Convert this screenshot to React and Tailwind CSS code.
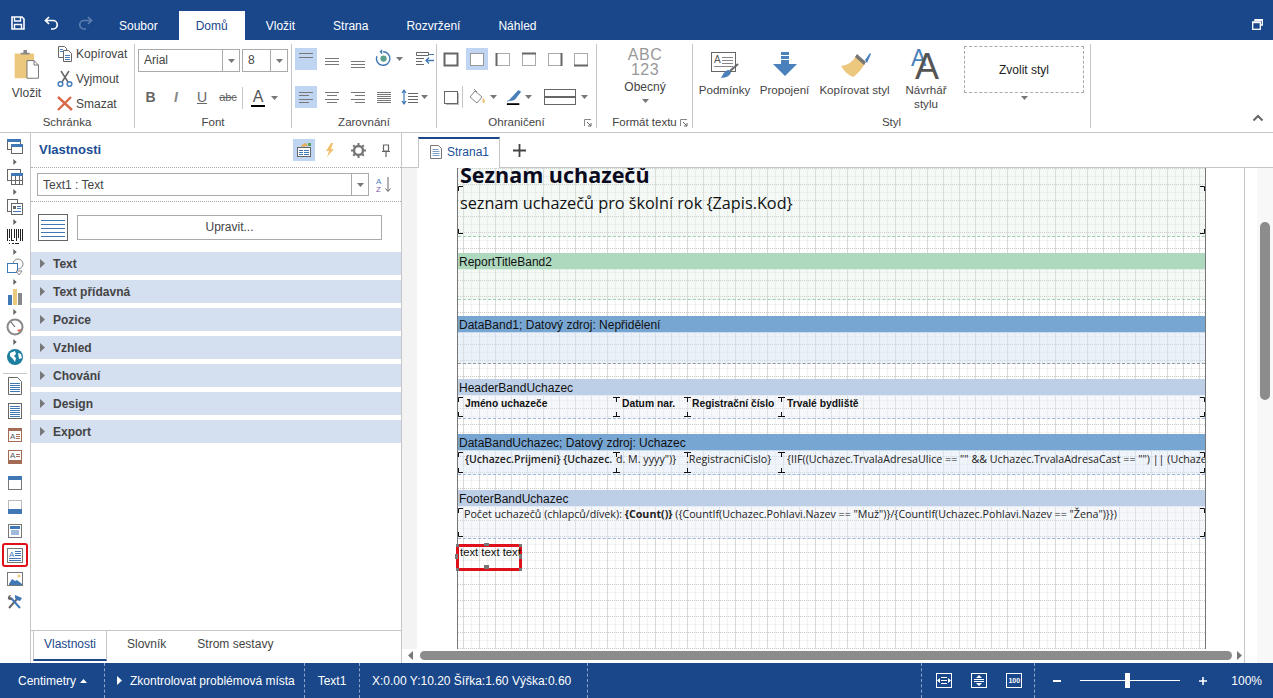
import React from "react";

const Caret = ({ c = "#777", className = "" }) => (
  <svg width="7" height="4" viewBox="0 0 9 5" className={className}><path d="M0 0h9L4.5 5z" fill={c} /></svg>
);
const RightTri = ({ c = "#777", w = 5, h = 9, className = "" }) => (
  <svg width={w} height={h} viewBox="0 0 5 9" className={className}><path d="M0 0l5 4.5L0 9z" fill={c} /></svg>
);

const Lines = ({ y, x1 = 4, x2 = 18, c = "#777" }) => (
  <g stroke={c} strokeWidth="1">{y.map((v, i) => <line key={i} x1={Array.isArray(x1) ? x1[i] : x1} x2={Array.isArray(x2) ? x2[i] : x2} y1={v + 0.5} y2={v + 0.5} />)}</g>
);
const Ic = ({ s = 22, children, active, vb }) => (
  <div className={`flex items-center justify-center shrink-0 ${active ? "bg-[#c0d5f2]" : ""}`} style={{ width: s, height: s }}>
    <svg width={s} height={s} viewBox={vb || `0 0 ${s} ${s}`}>{children}</svg>
  </div>
);

const BoxBorder = ({ sides = "", all }) => (
  <Ic>
    <rect x="4.5" y="5.5" width="13" height="12" fill="none" stroke={all ? "#666" : "#aaa"} strokeWidth={all ? 2 : 1} />
    {sides === "l" && <line x1="4.5" x2="4.5" y1="5" y2="18" stroke="#666" strokeWidth="2" />}
    {sides === "t" && <line x1="4" x2="18" y1="5.5" y2="5.5" stroke="#666" strokeWidth="2" />}
    {sides === "r" && <line x1="17.5" x2="17.5" y1="5" y2="18" stroke="#666" strokeWidth="2" />}
    {sides === "b" && <line x1="4" x2="18" y1="17.5" y2="17.5" stroke="#666" strokeWidth="2" />}
  </Ic>
);

const GroupLabel = ({ children, launcher }) => (
  <div className="relative h-[11px] text-center text-[11.5px] leading-[11px] text-[#444] mt-auto shrink-0">
    {children}
    {launcher && (
      <svg width="8" height="8" viewBox="0 0 8 8" className="absolute right-[4px] top-[2px]">
        <path d="M0.5 7V0.5H7" fill="none" stroke="#888" /><path d="M3 3l4 4M7 4v3H4" fill="none" stroke="#666" />
      </svg>
    )}
  </div>
);

const Group = ({ w, label, launcher, children }) => (
  <div className="flex flex-col h-[84px] border-r border-[#c6c6c6] shrink-0 mt-[4px]" style={{ width: w }}>
    <div className="flex-1 min-h-0">{children}</div>
    <GroupLabel launcher={launcher}>{label}</GroupLabel>
  </div>
);

function TopBar() {
  const tabs = ["Soubor", "Domů", "Vložit", "Strana", "Rozvržení", "Náhled"];
  return (
    <div className="h-[40px] bg-[#19478a] flex items-end shrink-0 text-white">
      <div className="flex items-center gap-[19px] pl-[11px] w-[100px] h-[29px] pb-[5px]">
        <svg width="14" height="14" viewBox="0 0 14 14"><path d="M1 1h10l2 2v10H1z" fill="none" stroke="#fff" strokeWidth="1.6" /><path d="M3.5 1v4h6V1M3.5 13V8.5h7V13" fill="none" stroke="#fff" strokeWidth="1.4" /></svg>
        <svg width="15" height="14" viewBox="0 0 15 14"><path d="M5 1L1.5 4.5 5 8M2 4.5h7a4 4 0 0 1 0 8.5H7" fill="none" stroke="#fff" strokeWidth="1.7" /></svg>
        <svg width="15" height="14" viewBox="0 0 15 14"><path d="M10 1l3.5 3.5L10 8M13 4.5H6a4 4 0 0 0 0 8.5h2" fill="none" stroke="#5d7fb0" strokeWidth="1.7" /></svg>
      </div>
      {tabs.map((t) => t === "Domů" ? (
        <div key={t} className="h-[29px] px-[17px] mx-[2px] bg-white text-[#19478a] text-[12px] leading-[30px]">{t}</div>
      ) : (
        <div key={t} className="h-[29px] px-[19px] text-[12px] leading-[30px] text-white">{t}</div>
      ))}
      <div className="ml-auto mr-[10px] mb-[10px]">
        <svg width="11" height="11" viewBox="0 0 11 11"><path d="M3 2V.7h7.3V6H8.5" fill="none" stroke="#fff" strokeWidth="1.3" /><rect x=".7" y="3" width="7.6" height="7.3" fill="none" stroke="#fff" strokeWidth="1.3" /><rect x="3" y=".3" width="8" height="1.6" fill="#fff" /><rect x=".3" y="2.6" width="8" height="1.6" fill="#fff" /></svg>
      </div>
    </div>
  );
}

function Ribbon() {
  return (
    <div className="h-[93px] border-b border-[#c6c6c6] flex shrink-0 relative bg-white">
      <Group w={135} label="Schránka">
        <div className="flex">
          <div className="w-[52px] flex flex-col items-center pt-[6px] pl-[2px]">
            <svg width="28" height="30" viewBox="0 0 30 34">
              <path d="M1 4h22v28H1z" fill="#ecc87f" />
              <path d="M8 5V3h3V0h4v3h3v2z" fill="#888" />
              <path d="M15 12h8l5 5v15H15z" fill="#fff" stroke="#666" />
              <path d="M23 12v5h5" fill="none" stroke="#666" />
            </svg>
            <div className="text-[12px] text-[#444] mt-[4px]">Vložit</div>
          </div>
          <div className="flex flex-col text-[12px] text-[#444] -mt-[3px]">
            {[
              ["Kopírovat", <svg key="a" width="16" height="17" viewBox="0 0 16 17"><path d="M1.5 1.5h6l2 2v9h-8z" fill="#fff" stroke="#666" /><path d="M6.5 5.5h5l3 3v8h-8z" fill="#fff" stroke="#666" /><path d="M3 4.5h3M3 6.5h3M8 10.5h5M8 12.5h5M8 14.5h5" stroke="#4a7fba" /></svg>],
              ["Vyjmout", <svg key="b" width="16" height="17" viewBox="0 0 16 17"><path d="M4 1l7 11M12 1L5 12" stroke="#666" strokeWidth="1.5" /><circle cx="3.5" cy="14" r="2.3" fill="none" stroke="#4a7fba" strokeWidth="1.6" /><circle cx="12.5" cy="14" r="2.3" fill="none" stroke="#4a7fba" strokeWidth="1.6" /></svg>],
              ["Smazat", <svg key="c" width="16" height="17" viewBox="0 0 16 17"><path d="M1 2l14 13M14 2L1 15" stroke="#d9694a" strokeWidth="2.4" /></svg>],
            ].map(([t, i]) => (
              <div key={t} className="flex items-center h-[25px] w-[77px] ml-[6px]"><div className="w-[19px]">{i}</div>{t}</div>
            ))}
          </div>
        </div>
      </Group>
      <Group w={157} label="Font">
        <div className="pl-[3px]">
          <div className="flex gap-[2px] pt-[5px]">
            <div className="w-[102px] h-[23px] border border-[#aaa] flex text-[12px] text-[#444] leading-[21px]">
              <div className="flex-1 pl-[5px]">Arial</div>
              <div className="w-[17px] border-l border-[#aaa] flex items-center justify-center"><Caret /></div>
            </div>
            <div className="w-[46px] h-[23px] border border-[#aaa] flex text-[12px] text-[#444] leading-[21px]">
              <div className="flex-1 pl-[5px]">8</div>
              <div className="w-[17px] border-l border-[#aaa] flex items-center justify-center"><Caret /></div>
            </div>
          </div>
          <div className="flex items-center pt-[14px] h-[37px] text-[#666] ml-[-3px] pl-[3px]">
            <div className="w-[25px] text-center font-bold text-[14px]">B</div>
            <div className="w-[26px] text-center italic font-bold text-[14px] text-[#888]">I</div>
            <div className="w-[26px] text-center text-[14px] underline">U</div>
            <div className="w-[26px] text-center text-[11px] line-through">abc</div>
            <div className="w-px h-[22px] bg-[#c6c6c6] mx-[1px]" />
            <div className="flex flex-col items-center w-[22px] ml-[3px] mt-[-1px]">
              <div className="text-[16px] leading-[17px] text-[#555]">A</div>
              <div className="w-[14px] h-[2px] bg-black" />
            </div>
            <Caret className="ml-[2px]" />
          </div>
        </div>
      </Group>
      <Group w={145} label="Zarovnání">
        <div className="pl-[3px] pt-[4px]">
          <div className="flex gap-[4px] items-center">
            <Ic active><Lines y={[5, 9]} /></Ic>
            <Ic><Lines y={[10, 13, 16]} /></Ic>
            <Ic><Lines y={[13, 16, 19]} /></Ic>
            <div className="flex items-center w-[30px] gap-[3px] pl-[2px]">
              <svg width="18" height="20" viewBox="0 0 20 20"><path d="M9 2a7.5 7.5 0 1 1-7 5" fill="none" stroke="#3f78b5" strokeWidth="1.6" /><path d="M8 -1v6l-3-3z" fill="#3f78b5" /><circle cx="9.5" cy="9.5" r="3.5" fill="#5ba08c" /></svg>
              <Caret />
            </div>
            <svg width="20" height="20" viewBox="0 0 20 20" className="ml-[8px]"><path d="M1.5 3.5h12v3h-12zM1 9.5h8M1 12.5h6M1 15.5h8" fill="none" stroke="#666" /><path d="M19 11.5h-7M14 8.5l-3 3 3 3" fill="none" stroke="#3f78b5" strokeWidth="1.3" /><path d="M14 5.5h5" stroke="#3f78b5" /></svg>
          </div>
          <div className="flex gap-[4px] items-center mt-[16px]">
            <Ic active><Lines y={[6, 9, 13, 16]} x2={[18, 14, 18, 14]} /></Ic>
            <Ic><Lines y={[6, 9, 13, 16]} x1={[4, 6, 4, 6]} x2={[18, 16, 18, 16]} /></Ic>
            <Ic><Lines y={[6, 9, 13, 16]} x1={[4, 8, 4, 8]} /></Ic>
            <Ic><Lines y={[6, 8, 10, 12, 14, 16]} /></Ic>
            <div className="flex items-center gap-[2px] ml-[2px]">
              <svg width="18" height="18" viewBox="0 0 18 18"><path d="M3 3v12M1 5l2-3 2 3M1 13l2 3 2-3" fill="none" stroke="#3f78b5" strokeWidth="1.2" /><path d="M7 5.5h10M7 8.5h10M7 11.5h10M7 14.5h10" stroke="#666" /></svg>
              <Caret />
            </div>
          </div>
        </div>
      </Group>
      <Group w={160} label="Ohraničení" launcher>
        <div className="pl-[3px] pt-[4px]">
          <div className="flex gap-[4px] items-center">
            <BoxBorder all />
            <Ic active><rect x="4.5" y="5.5" width="13" height="12" fill="#fff" stroke="#999" /></Ic>
            <BoxBorder sides="l" />
            <BoxBorder sides="t" />
            <BoxBorder sides="r" />
            <BoxBorder sides="b" />
          </div>
          <div className="flex items-center mt-[16px]">
            <Ic>
              <rect x="6" y="7" width="13" height="12" fill="#bbb" />
              <rect x="4.5" y="5.5" width="13" height="12" fill="#fff" stroke="#666" />
            </Ic>
            <div className="w-px h-[22px] bg-[#c6c6c6] mr-[6px]" />
            <svg width="18" height="18" viewBox="0 0 18 18"><path d="M6 3l7 6-5 6-7-6z" fill="none" stroke="#888" /><path d="M5 1l3 3" stroke="#888" /><path d="M14 10c2 2 3 4 1 5s-2-3-1-5z" fill="#ecc87f" /></svg>
            <Caret className="ml-[3px] mr-[9px]" />
            <svg width="16" height="16" viewBox="0 0 18 18"><path d="M3 13L14 1l3 2-7 9-4 1z" fill="#4a7fba" /><path d="M1 14c3-2 6-1 8-2" stroke="#4a7fba" fill="none" /><rect x="1" y="16" width="14" height="2" fill="#000" /></svg>
            <Caret className="ml-[3px] mr-[12px]" />
            <div className="w-[32px] h-[16px] border border-[#666] flex items-center"><div className="w-full h-[2px] bg-[#666]" /></div>
            <Caret className="ml-[5px]" />
          </div>
        </div>
      </Group>
      <Group w={96} label="Formát textu" launcher>
        <div className="flex flex-col items-center pt-[3px] pl-[1px] text-[#999]">
          <div className="text-[16px] leading-[15px] tracking-[0.5px]">ABC</div>
          <div className="text-[16px] leading-[15px] tracking-[0.5px]">123</div>
          <div className="text-[12px] text-[#444] leading-[14px] mt-[3px]">Obecný</div>
          <Caret className="mt-[5px]" />
        </div>
      </Group>
      <Group w={398} label="Styl">
        <div className="flex text-[11.6px] text-[#444] leading-[14px]">
          <div className="w-[63px] flex flex-col items-center pt-[8px] shrink-0">
            <svg width="28" height="27" viewBox="0 0 28 27">
              <rect x=".5" y=".5" width="24" height="19" fill="#fff" stroke="#666" />
              <text x="3" y="11" fontSize="10" fontFamily="Liberation Sans" fill="#555">A</text>
              <path d="M11 5.5h11M11 8.5h11M11 11.5h11M3 14.5h19" stroke="#888" />
              <path d="M10 26c3-6 5-8 8-8l2 2c0 3-5 6-10 6z" fill="#4a7fba" /><path d="M19 19l8-7" stroke="#666" strokeWidth="2" />
            </svg>
            <div className="mt-[4px]">Podmínky</div>
          </div>
          <div className="w-[57px] flex flex-col items-center pt-[8px] shrink-0">
            <svg width="24" height="24" viewBox="0 0 24 24"><path d="M8 0h8v3H8zM8 4h8v3H8zM8 8h8v4h8L12 24 0 12h8z" fill="#4a80bb" /></svg>
            <div className="mt-[7px]">Propojení</div>
          </div>
          <div className="w-[83px] flex flex-col items-center pt-[8px] shrink-0">
            <svg width="32" height="27" viewBox="0 0 32 27"><path d="M2 14c8-1 12-5 15-10l9 8c-3 4-7 10-12 13C9 23 5 19 2 14z" fill="#ecc87f" /><path d="M16 5l2-3 9 8-2 3z" fill="#777" /><path d="M26 8l5-7 1 1-4 9z" fill="#4a7fba" /></svg>
            <div className="mt-[4px]">Kopírovat styl</div>
          </div>
          <div className="w-[60px] flex flex-col items-center pt-[4px] shrink-0">
            <svg width="32" height="32" viewBox="0 0 32 32">
              <text x="1" y="18" fontSize="23" fontFamily="Liberation Sans" fill="#4a7fba">A</text>
              <text x="5" y="31" fontSize="36" fontFamily="Liberation Sans" fill="#555">A</text>
            </svg>
            <div className="mt-[3px] text-center">Návrhář<br />stylu</div>
          </div>
          <div className="ml-[8px] w-[120px] pt-[2px] flex flex-col items-center">
            <div className="w-[120px] h-[47px] border border-dashed border-[#aaa] flex items-center justify-center text-[12px] text-[#222]">Zvolit styl</div>
            <Caret className="mt-[3px]" />
          </div>
        </div>
      </Group>
      <svg width="12" height="8" viewBox="0 0 12 8" className="absolute right-[9px] bottom-[10px]"><path d="M1.5 6.5L6 2l4.5 4.5" fill="none" stroke="#666" strokeWidth="2" /></svg>
    </div>
  );
}

const Ic20 = ({ children }) => <svg width="18" height="18" viewBox="0 0 18 18">{children}</svg>;
const doc = (
  <Ic20><path d="M2.5 .5h9l4 4v13h-13z" fill="#fff" stroke="#666" /><path d="M4 6.5h10M4 8.5h10M4 10.5h10M4 12.5h10M4 14.5h10" stroke="#3f78b5" /></Ic20>
);
const RailItem = ({ arrow, h = 30, children, selected }) => (
  <div className="flex flex-col items-center shrink-0" style={{ height: h }}>
    <div className={`h-[24px] w-[26px] flex items-center justify-center rounded-[3px] box-border shrink-0 ${selected ? "border-[2px] border-[#e0101a]" : ""}`}>{children}</div>
    {arrow && <RightTri w={4} h={6} c="#666" />}
  </div>
);

function Rail() {
  return (
    <div className="w-[31px] border-r border-[#c6c6c6] shrink-0 flex flex-col items-center pt-[2px] bg-white">
      <RailItem arrow><Ic20><rect x="1.5" y="1.5" width="13" height="10" fill="#fff" stroke="#666" /><rect x="1" y="1" width="14" height="3" fill="#3f78b5" /><rect x="5.5" y="6.5" width="11" height="9" fill="#fff" stroke="#666" /><rect x="5" y="6" width="12" height="3" fill="#3f78b5" /></Ic20></RailItem>
      <RailItem arrow><Ic20><rect x="1.5" y="1.5" width="13" height="11" fill="#fff" stroke="#666" /><rect x="5.5" y="5.5" width="11" height="11" fill="#fff" stroke="#666" /><rect x="5" y="5" width="12" height="3" fill="#3f78b5" /><path d="M9.5 8v8M13.5 8v8M5 12.5h12" stroke="#666" /></Ic20></RailItem>
      <RailItem arrow><Ic20><rect x="1.5" y="1.5" width="10" height="12" fill="#fff" stroke="#666" /><rect x="5.5" y="5.5" width="11" height="11" fill="#fff" stroke="#666" /><path d="M7 8h3v3H7z" fill="#666" /><path d="M11 8.5h4M11 10.5h4M7 13.5h8" stroke="#3f78b5" /></Ic20></RailItem>
      <RailItem arrow><Ic20><path d="M1.5 1v12M3.5 1v9M5.5 1v12M8.5 1v9M10.5 1v12M12.5 1v9M14.5 1v12M16.5 1v12" stroke="#222" /><path d="M3 12.5h1M6 12.5h2M3 15.5h1M6 15.5h2M9 15.5h4" stroke="#222" /></Ic20></RailItem>
      <RailItem arrow><Ic20><circle cx="12" cy="6" r="5" fill="#fff" stroke="#888" /><rect x="1.5" y="5.5" width="10" height="9" fill="#fff" stroke="#3f78b5" /><path d="M10 13l3 4 3-4z" fill="#fff" stroke="#888" /></Ic20></RailItem>
      <RailItem arrow><Ic20><rect x="2" y="7" width="4" height="10" fill="#3f78b5" /><rect x="7" y="1" width="4" height="16" fill="#ecc87f" /><rect x="12" y="5" width="4" height="12" fill="#888" /></Ic20></RailItem>
      <RailItem arrow><Ic20><circle cx="9" cy="9" r="7.5" fill="#fff" stroke="#888" strokeWidth="2" /><path d="M9 9L5 4" stroke="#666" strokeWidth="1.2" /><path d="M15 11a6 6 0 0 1-2 3l-2-2z" fill="#d9694a" /></Ic20></RailItem>
      <RailItem h={32}><Ic20><circle cx="9" cy="9" r="8" fill="#1d7fa0" /><path d="M4 5l5-2 1 3-2 2 2 2-1 4-2-3-3-3zM12 5l3 1 1 4-3 1z" fill="#fff" /></Ic20></RailItem>
      <div className="w-[24px] h-px bg-[#c6c6c6] shrink-0 -mt-[4px]" />
      <RailItem h={25}>{doc}</RailItem>
      <RailItem h={25}><Ic20><rect x="2.5" y="1.5" width="13" height="15" fill="#fff" stroke="#666" /><path d="M4 4.5h10M4 6.5h10M4 8.5h10M4 10.5h10M4 12.5h10M4 14.5h10" stroke="#3f78b5" /></Ic20></RailItem>
      <RailItem h={22}><Ic20><rect x="2.5" y="1.5" width="13" height="13" fill="#fff" stroke="#a46b55" /><rect x="2" y="1" width="14" height="3" fill="#a46b55" /><text x="4" y="12" fontSize="8" fontFamily="Liberation Sans" fill="#555">A</text><path d="M10 7.5h4M10 9.5h4M10 11.5h4" stroke="#a46b55" /></Ic20></RailItem>
      <RailItem h={25}><Ic20><rect x="2.5" y="1.5" width="13" height="13" fill="#fff" stroke="#a46b55" /><rect x="2" y="11" width="14" height="4" fill="#a46b55" /><text x="4" y="9" fontSize="8" fontFamily="Liberation Sans" fill="#555">A</text><path d="M10 5.5h4M10 7.5h4" stroke="#a46b55" /></Ic20></RailItem>
      <RailItem h={24}><Ic20><rect x="2.5" y="2.5" width="13" height="13" fill="#fff" stroke="#777" /><rect x="2" y="2" width="14" height="4" fill="#3f78b5" /></Ic20></RailItem>
      <RailItem h={24}><Ic20><rect x="2.5" y="2.5" width="13" height="13" fill="#fff" stroke="#bbb" /><rect x="2" y="11" width="14" height="5" fill="#3f78b5" /></Ic20></RailItem>
      <RailItem h={24}><Ic20><rect x="2.5" y="2.5" width="13" height="13" fill="#fff" stroke="#777" /><rect x="4" y="4" width="10" height="3" fill="#3f78b5" /><rect x="5" y="8" width="8" height="5" fill="#9fbadb" /></Ic20></RailItem>
      <RailItem h={24} selected><svg width="16" height="15" viewBox="0 0 16 15"><rect x=".5" y=".5" width="15" height="14" fill="#fff" stroke="#777" /><text x="2" y="9" fontSize="8" fontFamily="Liberation Sans" fill="#3f78b5">A</text><path d="M8 3.5h6M8 5.5h6M8 7.5h6M2 10.5h12M2 12.5h12" stroke="#3f78b5" /></svg></RailItem>
      <RailItem h={23}><Ic20><rect x="1.5" y="2.5" width="15" height="13" fill="#fff" stroke="#777" /><circle cx="13" cy="6" r="1.6" fill="#ecc87f" /><path d="M3 14l3-5 3 2 2-1 5 4v1H3z" fill="#3f78b5" /></Ic20></RailItem>
      <RailItem h={24}><Ic20><path d="M3 15L12 5" stroke="#666" strokeWidth="2" /><path d="M9 2l7 3-2 3-3-1-2-2z" fill="#3f78b5" /><path d="M14 15L5 5" stroke="#3f78b5" strokeWidth="2" /><path d="M2 6a3 3 0 0 1 3-4l-1 2 2 1-1 2a3 3 0 0 1-3-1z" fill="#666" /></Ic20></RailItem>
    </div>
  );
}

function PropsPanel() {
  const sections = ["Text", "Text přídavná", "Pozice", "Vzhled", "Chování", "Design", "Export"];
  return (
    <div className="w-[371px] shrink-0 border-r border-[#c6c6c6] flex flex-col bg-white">
      <div className="h-[35px] flex items-center shrink-0 pl-[8px] border-b border-dotted border-[#aaa]">
        <div className="font-bold text-[13px] text-[#1c4f96] flex-1">Vlastnosti</div>
        <div className="w-[22px] h-[22px] bg-[#c0d5f2] flex items-center justify-center mr-[6px]">
          <svg width="16" height="16" viewBox="0 0 16 16"><rect x="1.5" y="5.5" width="13" height="9" fill="#fff" stroke="#666" /><path d="M3 8.5h4M8 8.5h5M3 10.5h4M8 10.5h5M3 12.5h4M8 12.5h5" stroke="#3f78b5" /><path d="M5 5c1-3 3-4 5-4l2 3z" fill="#e0b060" /><path d="M12 1h3v3h-3z" fill="#5ba05b" /></svg>
        </div>
        <svg width="14" height="16" viewBox="0 0 14 16" className="ml-[2px]"><path d="M8 1L3 9h3l-2 6 7-8H8l2-6z" fill="#f0c070" /></svg>
        <svg width="15" height="15" viewBox="0 0 15 15" className="ml-[14px]"><circle cx="7.5" cy="7.5" r="4.5" fill="none" stroke="#777" strokeWidth="2.5" /><path d="M7.5 0v3M7.5 12v3M0 7.5h3M12 7.5h3M2.2 2.2l2 2M10.8 10.8l2 2M2.2 12.8l2-2M10.8 4.2l2-2" stroke="#777" strokeWidth="2" /></svg>
        <svg width="10" height="13" viewBox="0 0 10 13" className="ml-[15px] mr-[10px]"><path d="M2.5 1h5v6h-5zM1 7.5h8M5 8v5" fill="none" stroke="#666" strokeWidth="1.2" /></svg>
      </div>
      <div className="h-[34px] shrink-0 flex items-center pl-[6px] border-b border-dotted border-[#aaa]">
        <div className="w-[332px] h-[23px] border border-[#aaa] flex text-[12px] text-[#444] leading-[22px] shrink-0">
          <div className="flex-1 pl-[5px]">Text1 : Text</div>
          <div className="w-[17px] border-l border-[#aaa] flex items-center justify-center"><Caret /></div>
        </div>
        <svg width="16" height="17" viewBox="0 0 16 17" className="ml-[7px]"><text x="0" y="8" fontSize="8" fontFamily="Liberation Sans" fill="#4a7fba">A</text><text x="0" y="16" fontSize="8" fontFamily="Liberation Sans" fill="#7b5ea7">Z</text><path d="M12 1v14M9.5 12.5l2.5 3 2.5-3" fill="none" stroke="#666" /></svg>
      </div>
      <div className="flex items-center h-[50px] pl-[7px] shrink-0">
        <svg width="30" height="27" viewBox="0 0 30 27"><rect x=".5" y=".5" width="29" height="26" fill="#fff" stroke="#666" /><path d="M3 6.5h24M3 10.5h24M3 14.5h24M3 18.5h24M3 22.5h24" stroke="#3f78b5" /></svg>
        <div className="ml-[9px] w-[305px] h-[25px] border border-[#aaa] text-[12px] text-[#444] text-center leading-[23px]">Upravit...</div>
      </div>
      <div className="flex flex-col gap-[5px]">
        {sections.map((s) => (
          <div key={s} className="h-[23px] bg-[#d4dff0] flex items-center pl-[9px] gap-[8px] text-[12px] font-bold text-[#444]">
            <RightTri c="#777" />
            {s}
          </div>
        ))}
      </div>
      <div className="mt-auto border-t border-[#c6c6c6] h-[33px] flex text-[12px] text-[#444] pl-[2px]">
        <div className="w-[74px] h-[30px] border-x border-[#c6c6c6] border-b-[2px] border-b-[#19478a] text-center leading-[27px] text-[#19478a]">Vlastnosti</div>
        <div className="ml-[20px] leading-[27px]">Slovník</div>
        <div className="ml-[31px] leading-[27px]">Strom sestavy</div>
      </div>
    </div>
  );
}

const Corner = ({ className, path }) => (
  <svg width="5" height="5" viewBox="0 0 5 5" className={`absolute ${className}`}><path d={path} fill="none" stroke="#111" strokeWidth="1" /></svg>
);
const Marks = () => (
  <>
    <Corner className="top-[1px]" path="M.5 5V.5H5" />
    <Corner className="bottom-[1px]" path="M.5 0v4.5H5" />
    <Corner className="top-[1px] right-0" path="M0 .5h4.5V5" />
    <Corner className="bottom-[1px] right-0" path="M0 4.5h4.5V0" />
  </>
);
const TMark = ({ x, bottom }) => (
  <svg width="7" height="5" viewBox="0 0 7 5" className={`absolute ${bottom ? "bottom-[1px]" : "top-[1px]"}`} style={{ left: x }}>
    <path d={bottom ? "M0 4.5h7M3.5 0v5" : "M0 .5h7M3.5 0v5"} fill="none" stroke="#111" />
  </svg>
);

const Band = ({ title, color }) => (
  <div className={`h-[17px] text-[12px] leading-[18px] pl-[1px] text-[#111] border-b border-white/60 ${color}`}>{title}</div>
);
const BAND_FONT = "[font-family:'Open_Sans','Noto_Sans',sans-serif]";

function Canvas() {
  return (
    <div className="flex-1 min-w-0 flex flex-col bg-white">
      <div className="h-[35px] shrink-0 flex items-end pl-[16px] border-b border-[#c6c6c6] relative">
        <div className="w-[82px] h-[31px] border-x border-[#c6c6c6] border-t-[2px] border-t-[#19478a] flex items-center pl-[11px] pb-[3px] gap-[5px] text-[12px] text-[#1c4f96] -mb-px bg-white">
          <svg width="12" height="14" viewBox="0 0 12 14"><path d="M.5.5h8l3 3v10H.5z" fill="#fff" stroke="#777" /><path d="M2.5 4.5h6M2.5 6.5h7M2.5 8.5h7M2.5 10.5h7" stroke="#7f9fc5" /></svg>
          Strana1
        </div>
        <svg width="13" height="13" viewBox="0 0 13 13" className="ml-[13px] mb-[10px]"><path d="M6.5 0v13M0 6.5h13" stroke="#444" strokeWidth="1.8" /></svg>
      </div>
      <div className="flex-1 min-h-0 flex">
        <div className="flex-1 min-w-0 flex flex-col">
          <div className="flex-1 min-h-0 flex overflow-hidden">
            <div className="w-[15px] bg-[#f3f3f3] shrink-0" />
            <div className="w-[40px] shrink-0" />
            <div className="w-[749px] shrink-0 border-x border-[#777] relative bg-white [background-image:repeating-linear-gradient(to_right,transparent_0_5px,#d8d8d8_5px_6px,transparent_6px_13px,#f1f1f1_13px_14px,transparent_14px_16px),repeating-linear-gradient(to_bottom,transparent_0_8px,rgba(255,255,255,.6)_8px_9px,transparent_9px_16px),repeating-linear-gradient(to_bottom,transparent_0_1px,#fff_1px_8px),repeating-linear-gradient(to_right,#c8c8c8_0_1px,transparent_1px_2px)]">
              <div className="h-[69px] bg-[#dcebe2]/30 border-b border-dashed border-[#9ccfb0] relative">
                <div className={`absolute left-[2px] top-[-7px] font-bold text-[21.5px] leading-[28px] text-[#0a0a1e] whitespace-nowrap ${BAND_FONT}`}>Seznam uchazečů</div>
                <div className={`absolute left-[2px] top-[23px] text-[16.25px] leading-[24px] text-[#111] whitespace-nowrap ${BAND_FONT}`}>seznam uchazečů pro školní rok {"{Zapis.Kod}"}</div>
                <Corner className="top-[18px]" path="M.5 5V.5H5" />
                <Corner className="top-[18px] right-0" path="M0 .5h4.5V5" />
                <Corner className="bottom-[2px]" path="M.5 0v4.5H5" />
                <Corner className="bottom-[2px] right-0" path="M0 4.5h4.5V0" />
              </div>
              <div className="h-[16px]" />
              <Band title="ReportTitleBand2" color="bg-[#afd9bf]" />
              <div className="h-[30px] bg-[#dcebe2]/30 border-b border-dashed border-[#9ccfb0]" />
              <div className="h-[16px]" />
              <Band title="DataBand1; Datový zdroj: Nepřidělení" color="bg-[#78a6d3]" />
              <div className="h-[31px] bg-[#d6e3f3]/50 border-b border-dashed border-[#999]" />
              <div className="h-[15px]" />
              <Band title="HeaderBandUchazec" color="bg-[#bdcfe6]" />
              <div className="h-[23px] bg-[#e6ecf6]/40 border-b border-dashed border-[#9db8da] relative text-[10.3px] font-bold text-[#111] leading-[16px] whitespace-nowrap">
                <span className="absolute left-[7px] top-0">Jméno uchazeče</span>
                <span className="absolute left-[164px] top-0">Datum nar.</span>
                <span className="absolute left-[234px] top-0">Registrační číslo</span>
                <span className="absolute left-[329px] top-0">Trvalé bydliště</span>
                <Marks />
                <TMark x={155} /><TMark x={155} bottom /><TMark x={226} /><TMark x={226} bottom /><TMark x={320} /><TMark x={320} bottom />
              </div>
              <div className="h-[15px]" />
              <Band title="DataBandUchazec; Datový zdroj: Uchazec" color="bg-[#78a6d3]" />
              <div className={`h-[24px] bg-[#dfe8f6]/50 border-b border-dashed border-[#9db8da] relative text-[10.7px] text-[#222] leading-[16px] whitespace-nowrap overflow-hidden ${BAND_FONT}`}>
                <span className="absolute left-[7px] top-0 text-[10.5px]"><b className="font-semibold">{"{Uchazec.Prijmeni} {Uchazec."}</b></span>
                <span className="absolute left-[158px] top-0">{"d. M. yyyy\")}"}</span>
                <span className="absolute left-[228px] top-0">{".RegistracniCislo}"}</span>
                <span className="absolute left-[329px] top-0 w-[418px] overflow-hidden">{"{IIF((Uchazec.TrvalaAdresaUlice == \"\" && Uchazec.TrvalaAdresaCast == \"\") || (Uchazec.TrvalaAdresa"}</span>
                <Marks />
                <TMark x={155} /><TMark x={155} bottom /><TMark x={226} /><TMark x={226} bottom /><TMark x={320} /><TMark x={320} bottom />
              </div>
              <div className="h-[15px]" />
              <Band title="FooterBandUchazec" color="bg-[#bdcfe6]" />
              <div className={`h-[32px] bg-[#e6ecf6]/40 border-b border-dashed border-[#9db8da] relative text-[10.7px] text-[#222] leading-[15px] whitespace-nowrap ${BAND_FONT}`}>
                <span className="absolute left-[6px] top-0">Počet uchazečů (chlapců/dívek): <b className="font-bold">{"{Count()}"}</b> {"({CountIf(Uchazec.Pohlavi.Nazev == \"Muž\")}/{CountIf(Uchazec.Pohlavi.Nazev == \"Žena\")}})"}</span>
                <Marks />
              </div>
              <div className="absolute left-[-2px] top-[376px] w-[66px] h-[27px] border-[3px] border-[#e0101a] rounded-[3px] text-[11.3px] leading-[10px] text-[#111] pl-[1px] whitespace-nowrap">
                text text text
                <span className="absolute left-[25px] bottom-[-1px] w-[5px] h-[4px] bg-[#777]" />
                <span className="absolute left-[25px] top-[-4px] w-[5px] h-[3px] bg-[#777]" />
                <span className="absolute left-[-4px] top-[7px] w-[3px] h-[5px] bg-[#777]" />
                <span className="absolute right-[-3px] top-[7px] w-[3px] h-[5px] bg-[#777]" />
                <span className="absolute left-[-3px] top-[-3px] w-[3px] h-[3px] bg-[#777]" />
                <span className="absolute right-[-3px] top-[-3px] w-[3px] h-[3px] bg-[#777]" />
                <span className="absolute left-[-3px] bottom-[-3px] w-[3px] h-[3px] bg-[#777]" />
                <span className="absolute right-[-3px] bottom-[-3px] w-[3px] h-[3px] bg-[#777]" />
              </div>
            </div>
            <div className="flex-1" />
          </div>
          <div className="h-[13px] shrink-0 flex items-center pl-[6px] pr-[2px] mb-[1px]">
            <svg width="5" height="9" viewBox="0 0 5 9"><path d="M5 0L0 4.5 5 9z" fill="#777" /></svg>
            <div className="ml-[7px] w-[818px] h-[9px] rounded-full bg-[#8c8c8c]" />
            <RightTri c="#777" className="ml-[5px]" />
          </div>
        </div>
        <div className="w-[29px] shrink-0 border-l border-[#c6c6c6] bg-white flex">
          <div className="w-[12px]" />
          <div className="w-[16px] bg-[#f8f8f8] relative pt-[54px] flex justify-center">
            <div className="w-[10px] h-[178px] rounded-full bg-[#8c8c8c]" />
          </div>
        </div>
      </div>
    </div>
  );
}

const Sep = () => <div className="w-0 h-full border-l border-dashed border-[#8fa7ca] shrink-0" />;

function StatusBar() {
  return (
    <div className="h-[35px] bg-[#19478a] flex items-center shrink-0 text-white text-[12px]">
      <div className="w-[104px] pl-[18px] flex items-center gap-[4px] shrink-0">Centimetry <svg width="7" height="4" viewBox="0 0 7 4"><path d="M0 4l3.5-4L7 4z" fill="#fff" /></svg></div>
      <Sep />
      <div className="w-[199px] pl-[12px] flex items-center gap-[8px] shrink-0"><RightTri c="#fff" />Zkontrolovat problémová místa</div>
      <Sep />
      <div className="w-[54px] text-center shrink-0">Text1</div>
      <Sep />
      <div className="w-[227px] pl-[12px] shrink-0">X:0.00 Y:10.20 Šířka:1.60 Výška:0.60</div>
      <Sep />
      <div className="flex-1" />
      <Sep />
      <div className="w-[112px] flex items-center pl-[14px] gap-[19px] shrink-0">
        <svg width="16" height="15" viewBox="0 0 16 15"><rect x=".5" y=".5" width="15" height="14" fill="none" stroke="#fff" /><path d="M5 4.5h6M5 7.5h6M5 10.5h6" stroke="#fff" /><path d="M1 7.5l3-2.5v5zM15 7.5l-3-2.5v5z" fill="#fff" /></svg>
        <svg width="16" height="15" viewBox="0 0 16 15"><rect x=".5" y=".5" width="15" height="14" fill="none" stroke="#fff" /><path d="M3 6.5h10M3 8.5h10" stroke="#fff" /><path d="M8 2l3 3H5zM8 13l3-3H5z" fill="#fff" /></svg>
        <div className="w-[16px] h-[15px] border border-white text-[7px] font-bold leading-[13px] text-center">100</div>
      </div>
      <Sep />
      <div className="w-[16px] ml-[18px] flex shrink-0"><div className="w-[8px] h-[2px] bg-white" /></div>
      <div className="w-[100px] h-[1px] ml-[11px] bg-white relative shrink-0">
        <div className="absolute left-[45px] top-[-7px] w-[5px] h-[15px] bg-white" />
      </div>
      <svg width="8" height="8" viewBox="0 0 8 8" className="ml-[19px] shrink-0"><path d="M4 0v8M0 4h8" stroke="#fff" strokeWidth="1.6" /></svg>
      <div className="ml-[24px] mr-[11px] shrink-0">100%</div>
    </div>
  );
}

export default function App() {
  return (
    <div className="w-[1273px] h-[698px] flex flex-col overflow-hidden bg-white [font-family:'Liberation_Sans',Arial,sans-serif]">
      <TopBar />
      <Ribbon />
      <div className="flex-1 min-h-0 flex">
        <Rail />
        <PropsPanel />
        <Canvas />
      </div>
      <StatusBar />
    </div>
  );
}
